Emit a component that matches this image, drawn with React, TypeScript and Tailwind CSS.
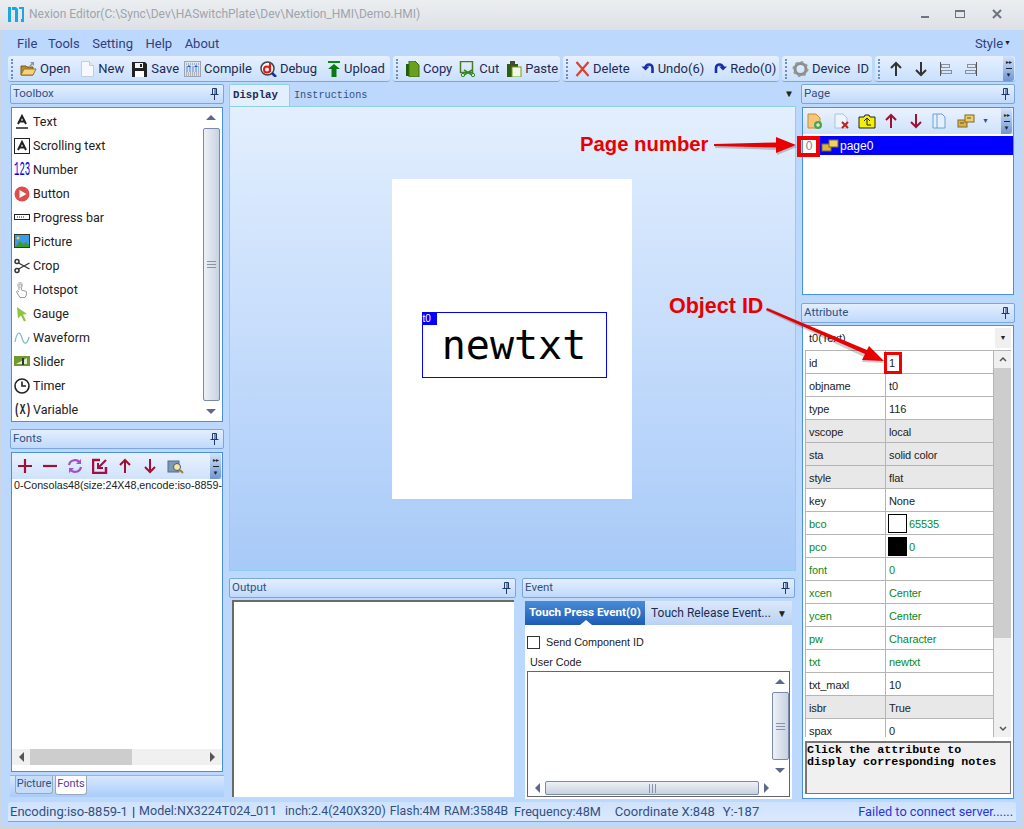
import React from 'react';

const sans = { fontFamily: 'Roboto, sans-serif' };
const arial = { fontFamily: '"Liberation Sans", sans-serif' };
const mono = { fontFamily: '"Liberation Mono", monospace' };

// small toolbar pictures
function Ico({ children, w = 16, h = 16 }: { children: React.ReactNode; w?: number; h?: number }) {
  return (
    <svg width={w} height={h} viewBox={`0 0 ${w} ${h}`} className="shrink-0">
      {children}
    </svg>
  );
}

const FolderIcon = () => (
  <Ico w={17}>
    <path d="M1 5h5l1 1h6v8H1z" fill="#b98a2e" stroke="#7a5a18" />
    <path d="M1 14l3-6h12l-3 6z" fill="#f6d27a" stroke="#9b7424" />
    <path d="M10 1l4 0 0 4-1.500-1.500-2 2-1-1 2-2z" fill="#8a94a8" />
  </Ico>
);
const NewIcon = () => (
  <Ico w={15}>
    <path d="M1.500.5h8l4 4v11h-12z" fill="#f6f8fc" stroke="#c6ccd6" />
    <path d="M9.500.5v4h4" fill="#e2e6ee" stroke="#c6ccd6" />
  </Ico>
);
const SaveIcon = () => (
  <Ico w={17}>
    <path d="M1 1h13l2 2v13H1z" fill="#222" />
    <rect x="4" y="2" width="8" height="5" fill="#f4f4f4" />
    <rect x="4" y="10" width="9" height="6" fill="#fff" />
    <rect x="9" y="3" width="2" height="3" fill="#222" />
  </Ico>
);
const CompileIcon = () => (
  <Ico w={17}>
    <rect x=".5" y=".5" width="16" height="15" fill="#dfe3ea" stroke="#9aa4b2" />
    <path d="M2 3h13M2 12h13M2 14h13" stroke="#77808e" strokeDasharray="1 1" />
    <path d="M2 6h13M2 8h13M2 10h13" stroke="#4a86e0" strokeDasharray="2 1" />
    <path d="M5 4l2 2H3zM12 4l2 2h-4z" fill="#1d5fd0" />
  </Ico>
);
const DebugIcon = () => (
  <Ico w={17}>
    <circle cx="7.500" cy="7.500" r="6.500" fill="#f4f4f4" stroke="#444" strokeWidth="1.500" />
    <circle cx="7" cy="8.500" r="3" fill="none" stroke="#e01818" strokeWidth="2" />
    <path d="M10 2v9" stroke="#e01818" strokeWidth="2" />
    <path d="M12 12l4 4" stroke="#1c2f8f" strokeWidth="2.500" />
  </Ico>
);
const UploadIcon = () => (
  <Ico w={14}>
    <rect x="1" y="0" width="12" height="2" fill="#0a8a10" />
    <path d="M7 3l6 5H9.500v8h-5V8H1z" fill="#0b7a10" />
  </Ico>
);
const CopyIcon = () => (
  <Ico w={15}>
    <path d="M1 3h3v12H1z" fill="#1f5c10" />
    <path d="M4 0h6l4 4v12H4z" fill="#6aa020" stroke="#3c6a10" />
  </Ico>
);
const CutIcon = () => (
  <Ico w={17}>
    <rect x="1.500" y=".5" width="12" height="11" fill="none" stroke="#4d7a20" strokeWidth="1.500" />
    <path d="M5 9l8 5M13 9l-8 5" stroke="#2e8a20" strokeWidth="1.500" />
    <circle cx="4" cy="14" r="1.700" fill="none" stroke="#2e8a20" />
    <circle cx="14" cy="14" r="1.700" fill="none" stroke="#2e8a20" />
  </Ico>
);
const PasteIcon = () => (
  <Ico w={16}>
    <rect x="1" y="3" width="11" height="13" fill="#2f5c10" />
    <rect x="4" y="0" width="5" height="4" fill="#4a4a2a" />
    <rect x="6" y="6" width="9" height="10" fill="#f4f7e4" stroke="#6aa020" />
  </Ico>
);
const DeleteIcon = () => (
  <Ico w={15}>
    <path d="M1.500 1l12 14M13.500 1l-12 14" stroke="#e04030" strokeWidth="2.200" />
  </Ico>
);
const UndoIcon = () => (
  <Ico w={14}>
    <path d="M11.500 12V7a3.500 3.500 0 0 0-7 0" fill="none" stroke="#1b2fa8" strokeWidth="2.600" />
    <path d="M0.500 5.500h8l-4 4z" fill="#1b2fa8" />
  </Ico>
);
const RedoIcon = () => (
  <Ico w={13}>
    <path d="M2 12V7a3.500 3.500 0 0 1 7 0" fill="none" stroke="#1b2fa8" strokeWidth="2.600" />
    <path d="M13 5.500H5l4 4z" fill="#1b2fa8" />
  </Ico>
);
const GearIcon = () => (
  <Ico w={17}>
    <circle cx="8.500" cy="8" r="5.500" fill="none" stroke="#8d8d8d" strokeWidth="3" />
    <circle cx="8.500" cy="8" r="7" fill="none" stroke="#9a9a9a" strokeWidth="2" strokeDasharray="2.500 3" />
  </Ico>
);
const Arrow = ({ down = false, color = '#333' }: { down?: boolean; color?: string }) => (
  <Ico w={14}>
    <g transform={down ? 'rotate(180 7 8)' : undefined}>
      <path d="M7 2v13M2 7l5-5 5 5" fill="none" stroke={color} strokeWidth="2" />
    </g>
  </Ico>
);
const AlignIcon = ({ flip = false }: { flip?: boolean }) => (
  <Ico w={14}>
    <g transform={flip ? 'matrix(-1 0 0 1 14 0)' : undefined} fill="none" stroke="#8a8f98">
      <path d="M1.500 1v14" stroke="#555" />
      <rect x="2.500" y="3.500" width="8" height="3" />
      <rect x="2.500" y="9.500" width="10" height="3" />
    </g>
  </Ico>
);
const PagesIcon = () => (
  <Ico w={18}>
    <rect x="1" y="7" width="9" height="7" fill="#e0b040" stroke="#7a6a2a" />
    <rect x="8" y="2" width="9" height="7" fill="#f0d060" stroke="#7a6a2a" />
    <path d="M3 10h4M10 5h4" stroke="#555" />
  </Ico>
);

function Pin() {
  return (
    <svg width="9" height="12" viewBox="0 0 9 12" className="shrink-0">
      <path d="M2.500.5h4v6h-4zM.5 6.500h8M4.500 7v5M5 1v5" fill="none" stroke="#1f3a70" />
    </svg>
  );
}

function PanelHeader({ title }: { title: string }) {
  return (
    <div className="flex h-[20px] shrink-0 items-center justify-between rounded-[2px] border border-[#7ba6dc] bg-gradient-to-b from-[#e3efff] to-[#c0d9fb] pl-[2px] pr-[4px] text-[11.500px] text-[#33507f]" style={sans}>
      <span>{title}</span>
      <Pin />
    </div>
  );
}

function Tri({ dir, color = '#5b6a8c' }: { dir: 'up' | 'down' | 'left' | 'right'; color?: string }) {
  const d = { up: 'M0 7L5 2l5 5z', down: 'M0 3l5 5 5-5z', left: 'M7 0L2 5l5 5z', right: 'M3 0l5 5-5 5z' }[dir];
  return (
    <svg width="10" height="10" viewBox="0 0 10 10" className="shrink-0">
      <path d={d} fill={color} />
    </svg>
  );
}

function Grip() {
  return <div className="mr-[5px] h-[20px] w-[2px] shrink-0 border-l-2 border-dotted border-[#6d8fc0]" />;
}

function ToolItem({ icon, label, ml = 0 }: { icon: React.ReactNode; label: string; ml?: number }) {
  return (
    <div className="flex items-center gap-[3px] whitespace-pre" style={{ marginLeft: ml }}>
      {icon}
      <span className="pt-[1px]">{label}</span>
    </div>
  );
}

function ToolGroup({ width, children }: { width: number; children: React.ReactNode }) {
  return (
    <div className="flex h-[26px] shrink-0 items-center rounded-[3px] border-b border-[#7ba6dc] bg-gradient-to-b from-[#e6f0ff] to-[#c9e0fd] pl-[3px]" style={{ width }}>
      <Grip />
      {children}
    </div>
  );
}

function Overflow() {
  return (
    <div className="ml-auto mr-[1px] flex h-full w-[11px] flex-col items-center justify-center gap-[3px] rounded-r-[3px] bg-gradient-to-b from-[#d4e4fb] to-[#6f97d2]">
      <span className="text-[6px] leading-[6px] text-[#222]">▸▸</span>
      <span className="h-[1px] w-[6px] bg-[#222]" />
      <span className="text-[6px] leading-[6px] text-[#222]">▼</span>
    </div>
  );
}

const toolbox: { label: string; icon: React.ReactNode }[] = [
  { label: 'Text', icon: <Ico><path d="M4 10l4-8 4 8M5.500 7.500h5" fill="none" stroke="#222" strokeWidth="2" /><path d="M2 14h12" stroke="#222" strokeWidth="1.500" /></Ico> },
  { label: 'Scrolling text', icon: <Ico><rect x=".5" y=".5" width="15" height="15" fill="none" stroke="#222" /><path d="M4 12l4-8 4 8M5.500 9.500h5" fill="none" stroke="#222" strokeWidth="2" /></Ico> },
  { label: 'Number', icon: <span className="block w-[16px] whitespace-nowrap text-[20px] leading-none text-[#0000e0]" style={{ ...mono, transform: 'scaleX(0.45)', transformOrigin: 'left' }}>123</span> },
  { label: 'Button', icon: <Ico><circle cx="8" cy="8" r="7.500" fill="#e24b4b" /><path d="M5.500 4l7 4-7 4z" fill="#fff" /></Ico> },
  { label: 'Progress bar', icon: <Ico><rect x=".5" y="4.500" width="15" height="5" fill="#fff" stroke="#222" /><path d="M3 7h7" stroke="#222" strokeDasharray="1 1" /></Ico> },
  { label: 'Picture', icon: <Ico><rect width="16" height="14" fill="#2f3a2a" /><rect x="1" y="1" width="14" height="12" fill="#3e9be8" /><path d="M1 13l5-6 3 3 3-2 3 3v2z" fill="#3f9a2c" /><circle cx="4" cy="4" r="1.500" fill="#f0d040" /></Ico> },
  { label: 'Crop', icon: <Ico><circle cx="3" cy="3.500" r="2" fill="none" stroke="#333" strokeWidth="1.500" /><circle cx="3" cy="12.500" r="2" fill="none" stroke="#333" strokeWidth="1.500" /><path d="M4.500 5l11 6M4.500 11l11-6" stroke="#333" strokeWidth="1.300" /></Ico> },
  { label: 'Hotspot', icon: <Ico><path d="M5 8V3a1.200 1.200 0 0 1 2.400 0v5l5 1.500V13l-1.500 2.500H6L2.500 10 3.500 8.500 5 10" fill="#fff" stroke="#9a9a9a" /><circle cx="6" cy="3" r="2.500" fill="none" stroke="#c0c0c0" /></Ico> },
  { label: 'Gauge', icon: <Ico><path d="M3 1l10 7-4 .5 3 6-2 1-3-6-3 3z" fill="#8dc63f" /></Ico> },
  { label: 'Waveform', icon: <Ico><path d="M1 12C3 1 6 1 8 8s5 7 7-1" fill="none" stroke="#7fb8c8" strokeWidth="1.200" /></Ico> },
  { label: 'Slider', icon: <Ico><rect y="2" width="16" height="10" fill="#6f9a30" /><path d="M2 10l11-6v6z" fill="#e4ecd0" /><rect x="8" y="4" width="2" height="7" fill="#333" /></Ico> },
  { label: 'Timer', icon: <Ico><circle cx="8" cy="8" r="7" fill="none" stroke="#222" strokeWidth="1.600" /><path d="M8 3.500V8h4" fill="none" stroke="#222" strokeWidth="1.600" /></Ico> },
  { label: 'Variable', icon: <span className="block w-[16px] whitespace-nowrap text-[14px] font-bold leading-none text-[#222]" style={{ ...mono, transform: 'scaleX(0.68)', transformOrigin: 'left' }}>(X)</span> },
];

const rows: { k: string; v: string; green?: boolean; grey?: boolean; swatch?: string }[] = [
  { k: 'id', v: '1' },
  { k: 'objname', v: 't0' },
  { k: 'type', v: '116' },
  { k: 'vscope', v: 'local', grey: true },
  { k: 'sta', v: 'solid color', grey: true },
  { k: 'style', v: 'flat', grey: true },
  { k: 'key', v: 'None' },
  { k: 'bco', v: '65535', green: true, swatch: '#ffffff' },
  { k: 'pco', v: '0', green: true, swatch: '#000000' },
  { k: 'font', v: '0', green: true },
  { k: 'xcen', v: 'Center', green: true },
  { k: 'ycen', v: 'Center', green: true },
  { k: 'pw', v: 'Character', green: true },
  { k: 'txt', v: 'newtxt', green: true },
  { k: 'txt_maxl', v: '10' },
  { k: 'isbr', v: 'True', grey: true },
  { k: 'spax', v: '0' },
];

function VScroll() {
  return (
    <div className="flex h-full w-[18px] shrink-0 flex-col items-center bg-white">
      <div className="flex h-[20px] items-center"><Tri dir="up" /></div>
      <div className="flex w-[17px] flex-1 items-center justify-center rounded-[2px] border border-[#7a8aa8] bg-gradient-to-r from-[#eef1f6] to-[#c8d2e0]">
        <div className="h-[7px] w-[9px] border-y border-[#8a94a8] bg-[linear-gradient(#8a94a8,#8a94a8)] bg-[length:100%_1px] bg-center bg-no-repeat" />
      </div>
      <div className="flex h-[20px] items-center"><Tri dir="down" /></div>
    </div>
  );
}

export default function App() {
  return (
    <div className="relative flex h-[829px] w-[1024px] flex-col overflow-hidden bg-[#bcd9fd] shadow-[inset_2px_0_0_#cdd6e0,inset_-2px_0_0_#cdd6e0,inset_0_-3px_0_#cdd6e0]" style={sans}>
      {/* title bar */}
      <div className="flex h-[30px] shrink-0 items-center bg-gradient-to-b from-[#eceef1] to-[#dde1e6] pb-[2px] pl-[8px] pr-[22px] text-[12px] text-[#a0a4ab]">
        <svg width="17" height="17" viewBox="0 0 17 17" className="shrink-0">
          <path d="M0 1h3v15H0zM4 1h4l2 2v13H7V4H4zM11 1h5v15h-3v-3h1V3h-3z" fill="#19a7e0" />
        </svg>
        <span className="ml-[4px]">Nexion Editor(C:\Sync\Dev\HASwitchPlate\Dev\Nextion_HMI\Demo.HMI)</span>
        <div className="ml-auto flex items-center text-[#6d7480]">
          <span className="mt-[6px] h-[2px] w-[8px] bg-[#6d7480]" />
          <span className="ml-[26px] h-[8px] w-[10px] border border-t-2 border-[#6d7480]" />
          <svg width="10" height="10" viewBox="0 0 10 10" className="ml-[27px]"><path d="M1 1l8 8M9 1L1 9" stroke="#6d7480" strokeWidth="2" /></svg>
        </div>
      </div>

      {/* menu */}
      <div className="flex h-[26px] shrink-0 items-center pl-[17px] pr-[13px] pt-[1px] text-[13px] text-[#2f3f80]">
        <div className="flex gap-[12.500px]">
          <span className="-mr-[2px]">File</span><span>Tools</span><span>Setting</span><span>Help</span><span>About</span>
        </div>
        <span className="ml-auto">Style</span>
        <span className="ml-[1px] text-[7px] text-[#222]">▼</span>
      </div>

      {/* toolbar */}
      <div className="flex h-[26px] shrink-0 gap-[3px] pl-[8px] text-[13px] text-[#1d2b55]">
        <ToolGroup width={382}>
          <ToolItem icon={<FolderIcon />} label="Open" ml={2} />
          <ToolItem icon={<NewIcon />} label="New" ml={10} />
          <ToolItem icon={<SaveIcon />} label="Save" ml={7} />
          <ToolItem icon={<CompileIcon />} label="Compile" ml={5} />
          <ToolItem icon={<DebugIcon />} label="Debug" ml={8} />
          <ToolItem icon={<UploadIcon />} label="Upload" ml={10} />
        </ToolGroup>
        <ToolGroup width={167}>
          <ToolItem icon={<CopyIcon />} label="Copy" ml={2} />
          <ToolItem icon={<CutIcon />} label="Cut" ml={7} />
          <ToolItem icon={<PasteIcon />} label="Paste" ml={7} />
        </ToolGroup>
        <ToolGroup width={216}>
          <ToolItem icon={<DeleteIcon />} label="Delete" ml={2} />
          <ToolItem icon={<UndoIcon />} label="Undo(6)" ml={11} />
          <ToolItem icon={<RedoIcon />} label="Redo(0)" ml={10} />
        </ToolGroup>
        <ToolGroup width={90}>
          <ToolItem icon={<GearIcon />} label="Device  ID" ml={0} />
        </ToolGroup>
        <ToolGroup width={140}>
          <div className="ml-[4px] flex gap-[11px]">
            <Arrow />
            <Arrow down />
            <AlignIcon />
            <AlignIcon flip />
          </div>
          <Overflow />
        </ToolGroup>
      </div>

      {/* main area */}
      <div className="flex min-h-0 flex-1 pl-[10px] pr-[9px] pt-[2px]">
        {/* left column */}
        <div className="flex w-[214px] shrink-0 flex-col">
          <PanelHeader title="Toolbox" />
          <div className="mx-px mt-[3px] flex h-[315px] shrink-0 border border-[#4a90e2] bg-white pr-[2px]">
            <div className="flex-1 pl-[2px] pt-[2px]">
              {toolbox.map((t) => (
                <div key={t.label} className="flex h-[24px] items-center gap-[3px] text-[12.500px] text-[#222]">
                  <div className="flex w-[16px] shrink-0 items-center">{t.icon}</div>
                  <span>{t.label}</span>
                </div>
              ))}
            </div>
            <VScroll />
          </div>
          <div className="mt-[7px]"><PanelHeader title="Fonts" /></div>
          <div className="mx-px mt-[3px] flex h-[320px] shrink-0 flex-col border border-[#4a90e2] bg-white">
            <div className="flex h-[26px] shrink-0 items-center bg-gradient-to-b from-[#eaf2ff] to-[#cfe2fb] pl-[5px]">
              <div className="flex items-center gap-[9px]">
                <svg width="16" height="16" viewBox="0 0 16 16"><path d="M8 1v14M1 8h14" stroke="#a01030" strokeWidth="2.200" /></svg>
                <svg width="16" height="16" viewBox="0 0 16 16"><path d="M1 8h14" stroke="#a01030" strokeWidth="2.200" /></svg>
                <svg width="16" height="16" viewBox="0 0 16 16"><path d="M2 7a6 6 0 0 1 11-2M14 9a6 6 0 0 1-11 2" fill="none" stroke="#a050c8" strokeWidth="2.200" /><path d="M14 1v5H9zM2 15v-5h5z" fill="#a050c8" /></svg>
                <svg width="16" height="16" viewBox="0 0 16 16"><path d="M14 9v6H1V2h7" fill="none" stroke="#a01040" strokeWidth="2.500" /><path d="M14 2L6 10M6 5v5h5" fill="none" stroke="#a01040" strokeWidth="2" /></svg>
                <div className="flex w-[16px] justify-center"><Arrow color="#a01030" /></div>
                <div className="flex w-[16px] justify-center"><Arrow down color="#a01030" /></div>
                <Ico w={17}><rect x="1" y="3" width="11" height="11" fill="#7a9ab8" stroke="#5a6a8a" /><circle cx="10" cy="9" r="3.500" fill="#f4e9a8" stroke="#555" /><path d="M13 12l3 3" stroke="#a08020" strokeWidth="2" /></Ico>
              </div>
              <Overflow />
            </div>
            <div className="min-h-0 flex-1 overflow-hidden whitespace-nowrap pl-[2px] text-[10.700px] leading-[13px] text-[#222]" style={arial}>
              0-Consolas48(size:24X48,encode:iso-8859-1
            </div>
            <div className="mb-[6px] flex h-[16px] shrink-0 items-center bg-[#f0f0f0] px-[5px]">
              <Tri dir="left" color="#555" />
              <div className="ml-[3px] h-full w-[102px] bg-[#cdcdcd]" />
              <div className="ml-auto"><Tri dir="right" color="#555" /></div>
            </div>
          </div>
          <div className="mt-[3px] flex h-[22px] shrink-0 items-start gap-[2px] border-t border-[#8fb5e6] bg-gradient-to-b from-[#d8e8fe] to-[#a9ccfa] pl-[5px] text-[11px]">
            <span className="h-[18px] w-[38px] rounded-b-[3px] border border-t-0 border-[#9aa8bc] bg-[#c6dcf8] text-center text-[#33507f]">Picture</span>
            <span className="h-[19px] w-[32px] rounded-b-[3px] border border-t-0 border-[#9aa8bc] bg-white text-center text-[#5a3aa0]">Fonts</span>
          </div>
        </div>

        {/* centre column */}
        <div className="ml-[5px] flex w-[567px] shrink-0 flex-col">
          <div className="flex h-[22px] shrink-0 items-end justify-between pr-[4px]" style={mono}>
            <div className="flex items-end">
              <span className="flex h-[22px] w-[61px] items-center rounded-t-[2px] border border-b-0 border-[#8fd0e6] bg-[#e2effe] pl-[3px] text-[10.700px] font-bold text-[#1d2b55]">Display</span>
              <span className="flex h-[20px] items-center pl-[4px] text-[10.200px] text-[#33507f]">Instructions</span>
            </div>
            <span className="mb-[6px] text-[10px] leading-none text-[#222]">▼</span>
          </div>
          <div className="relative flex h-[465px] shrink-0 items-center justify-center border border-[#8fd0e6] bg-gradient-to-b from-[#e3effe] to-[#a8caf8]">
            <div className="relative mr-[2px] h-[320px] w-[240px] bg-white">
              <div className="absolute left-[30px] top-[133px] flex h-[66px] w-[185px] items-center justify-center border border-[#0000ff]" style={{ fontFamily: '"DejaVu Sans Mono", monospace' }}>
                <span className="absolute left-0 top-0 h-[12px] w-[14px] bg-[#0000ff] text-[10px] leading-[12px] text-white" style={arial}>t0</span>
                <span className="text-[40px] leading-none text-black">newtxt</span>
              </div>
            </div>
          </div>
          <div className="mt-[7px] flex min-h-0 flex-1 gap-[6px]">
            <div className="flex w-[287px] shrink-0 flex-col">
              <PanelHeader title="Output" />
              <div className="ml-[3px] mr-[2px] mt-[2px] h-[197px] shrink-0 border-l-2 border-t-2 border-[#6a6a6a] bg-white" />
            </div>
            <div className="flex w-[273px] shrink-0 flex-col">
              <PanelHeader title="Event" />
              <div className="mx-[3px] mt-[3px] flex h-[24px] shrink-0 items-center bg-gradient-to-b from-[#dce8f8] to-[#b9d2f4] text-[12px]">
                <span className="relative flex h-[24px] w-[120px] items-center justify-center whitespace-nowrap bg-gradient-to-b from-[#4a8bd8] to-[#1c5cb4] text-[11.700px] font-bold text-white">
                  Touch Press Event(0)
                  <span className="absolute bottom-0 left-[55px] h-0 w-0 border-x-[6px] border-b-[5px] border-x-transparent border-b-white" />
                </span>
                <span className="ml-[6px] whitespace-nowrap text-[#1d2b55]">Touch Release Event...</span>
                <span className="ml-auto mr-[5px] text-[10px] text-[#222]">▼</span>
              </div>
              <div className="mx-[3px] flex h-[174px] shrink-0 flex-col bg-white pl-[2px] text-[10.800px] text-[#222]" style={arial}>
                <div className="mt-[9px] flex items-center gap-[6px]">
                  <span className="h-[13px] w-[13px] border border-[#333]" />
                  <span>Send Component ID</span>
                </div>
                <span className="ml-[3px] mt-[5px] leading-[14px]">User Code</span>
                <div className="mt-[2px] flex h-[126px] w-[263px] flex-col border border-[#666]">
                  <div className="flex min-h-0 flex-1 justify-end"><VScroll /></div>
                  <div className="flex h-[16px] shrink-0 items-center gap-[2px] pl-[5px] pr-[18px]">
                    <Tri dir="left" />
                    <div className="flex h-[14px] flex-1 items-center justify-center rounded-[2px] border border-[#7a8aa8] bg-gradient-to-b from-[#eef1f6] to-[#c8d2e0]">
                      <div className="h-[9px] w-[7px] border-x border-[#8a94a8] bg-[linear-gradient(#8a94a8,#8a94a8)] bg-[length:1px_100%] bg-center bg-no-repeat" />
                    </div>
                    <Tri dir="right" />
                  </div>
                </div>
              </div>
            </div>
          </div>
        </div>

        {/* right column */}
        <div className="ml-[5px] flex w-[214px] shrink-0 flex-col">
          <PanelHeader title="Page" />
          <div className="mx-px mt-[3px] flex h-[188px] shrink-0 flex-col border border-[#4a90e2] bg-white">
            <div className="h-[28px] shrink-0 pb-[2px]">
              <div className="flex h-full items-center bg-gradient-to-b from-[#eaf2ff] to-[#cfe2fb] pl-[3px]">
                <Ico w={18}><path d="M2 1h8l4 4v10H2z" fill="#f4c67a" stroke="#c88a30" /><circle cx="12" cy="12" r="4" fill="#4aa84a" /><path d="M10 12h4M12 10v4" stroke="#fff" /></Ico>
                <div className="ml-[9px]"><Ico w={18}><path d="M2 1h8l4 4v10H2z" fill="#eef4fb" stroke="#a8c4dc" /><path d="M9 9l6 6M15 9l-6 6" stroke="#c02020" strokeWidth="2" /></Ico></div>
                <div className="ml-[7px]"><Ico w={18}><path d="M1 4h5l1-2h4l1 2h5v11H1z" fill="#f4f000" stroke="#222" /><path d="M9 6v6h4M6 8l3-3 3 3" fill="none" stroke="#222" /></Ico></div>
                <div className="ml-[8px]"><Arrow color="#a01030" /></div>
                <div className="ml-[11px]"><Arrow down color="#a01030" /></div>
                <div className="ml-[9px]"><Ico w={17}><path d="M1 1h9l3 3v11H1z" fill="#e6f0fc" stroke="#6aa0d8" /><path d="M5 1v14" stroke="#6aa0d8" /></Ico></div>
                <div className="ml-[8px]"><PagesIcon /></div>
                <span className="ml-[7px] text-[7px] text-[#2f4f9f]">▼</span>
                <Overflow />
              </div>
            </div>
            <div className="flex h-[19px] shrink-0 items-center pl-[1px] text-[12px]" style={arial}>
              <span className="w-[10px] text-center text-[#888]">0</span>
              <div className="ml-[6px] flex h-[19px] flex-1 items-center bg-[#0000ff] pl-[1px]">
                <Ico w={18}><rect x="1" y="6" width="9" height="7" fill="#e0b040" stroke="#7a6a2a" /><rect x="8" y="2" width="9" height="7" fill="#f0d060" stroke="#7a6a2a" /></Ico>
                <span className="ml-[1px] text-white">page0</span>
              </div>
            </div>
          </div>
          <div className="mt-[8px]"><PanelHeader title="Attribute" /></div>
          <div className="mx-px mt-[2px] flex h-[474px] shrink-0 flex-col border border-[#4a90e2] bg-white pl-[2px] pr-[2px]" style={arial}>
            <div className="flex h-[24px] shrink-0 items-center justify-between pl-[4px] text-[11px] text-[#222]">
              <span>t0(Text)</span>
              <span className="flex h-[20px] w-[16px] items-center justify-center bg-[#f0f0f0] text-[7px]">▼</span>
            </div>
            <div className="flex h-[387px] shrink-0 overflow-hidden border-l border-t border-[#b5b5b5]">
              <div className="w-[188px] shrink-0 overflow-hidden border-r border-[#b5b5b5]">
                {rows.map((r) => (
                  <div key={r.k} className={`flex h-[23px] items-center border-b border-[#b5b5b5] text-[11px] tracking-[-0.1px] ${r.grey ? 'bg-[#e8e8e8]' : 'bg-white'} ${r.green ? 'text-[#0a8a1a]' : 'text-[#222]'}`}>
                    <span className="h-[22px] w-[80px] shrink-0 border-r border-[#b5b5b5] pl-[3px] pt-[2px] leading-[20px]">{r.k}</span>
                    <span className="flex items-center pl-[3px] pt-[2px]">
                      {r.swatch && <span className="-mt-[2px] ml-[-1px] mr-[2px] h-[19px] w-[19px] border border-black" style={{ background: r.swatch }} />}
                      {r.v}
                    </span>
                  </div>
                ))}
              </div>
              <div className="flex flex-1 flex-col items-center bg-[#f0f0f0]">
                <svg width="10" height="17" viewBox="0 0 10 17" className="shrink-0"><path d="M2 10l3-3 3 3" fill="none" stroke="#555" strokeWidth="1.500" /></svg>
                <div className="h-[270px] w-full bg-[#cdcdcd]" />
                <div className="flex-1" />
                <svg width="10" height="17" viewBox="0 0 10 17" className="shrink-0"><path d="M2 7l3 3 3-3" fill="none" stroke="#555" strokeWidth="1.500" /></svg>
              </div>
            </div>
            <div className="mt-[4px] h-[53px] border-2 border-b border-r border-[#777] bg-[#f0f0f0] pl-0 pt-[1px] text-[11.700px] font-bold leading-[12px] text-black" style={mono}>
              Click the attribute to<br />display corresponding notes
            </div>
          </div>
        </div>
      </div>

      {/* status bar */}
      <div className="mx-[8px] mb-[7px] flex h-[20px] shrink-0 items-center whitespace-nowrap rounded-t-[3px] border-b border-[#7ba6dc] bg-gradient-to-b from-[#cfe2fd] to-[#dbe9fe] pl-[2px] pr-[3px] text-[13px] text-[#33507f]">
        <span>Encoding:iso-8859-1</span>
        <span className="mx-[4px] text-[#1d2b55]">|</span>
        <span className="text-[12.500px]">Model:NX3224T024_011</span>
        <span className="ml-[8px] text-[12.300px]">inch:2.4(240X320)</span>
        <span className="ml-[4px] text-[12.300px]">Flash:4M</span>
        <span className="ml-[4px] text-[12.200px]">RAM:3584B</span>
        <span className="ml-[6px] text-[12.700px]">Frequency:48M</span>
        <span className="ml-[14px]">Coordinate X:848</span>
        <span className="ml-[8px]">Y:-187</span>
        <span className="ml-auto text-[12.750px] text-[#2a35d8]">Failed to connect server......</span>
      </div>

      {/* red annotations over the screenshot */}
      <span className="absolute left-[580px] top-[132px] text-[20.300px] font-bold leading-[24px] text-[#e80000]" style={arial}>Page number</span>
      <span className="absolute left-[669px] top-[294px] text-[21.500px] font-bold leading-[24px] text-[#e80000]" style={arial}>Object ID</span>
      <span className="absolute left-[797px] top-[136px] h-[21px] w-[23px] border-[4px] border-[#f00000]" />
      <span className="absolute left-[884px] top-[352px] h-[22px] w-[18px] border-[3px] border-[#f00000]" />
      <svg width="1024" height="829" viewBox="0 0 1024 829" className="pointer-events-none absolute left-0 top-0">
        <path d="M715 146L777 144V139L797 147L777 155V150L715 148z" fill="#000" fillOpacity="0.2" />
        <path d="M714 144L776 142.500V137L796 145L776 153V147.500L714 146z" fill="#e80000" />
        <path d="M766 311L864 357L862 362L884 363L870 349L867 353L769 308z" fill="#000" fillOpacity="0.2" />
        <path d="M767 308L867 350L869 346L884 361L862 360L865 354L766 310z" fill="#e80000" />
      </svg>
    </div>
  );
}
